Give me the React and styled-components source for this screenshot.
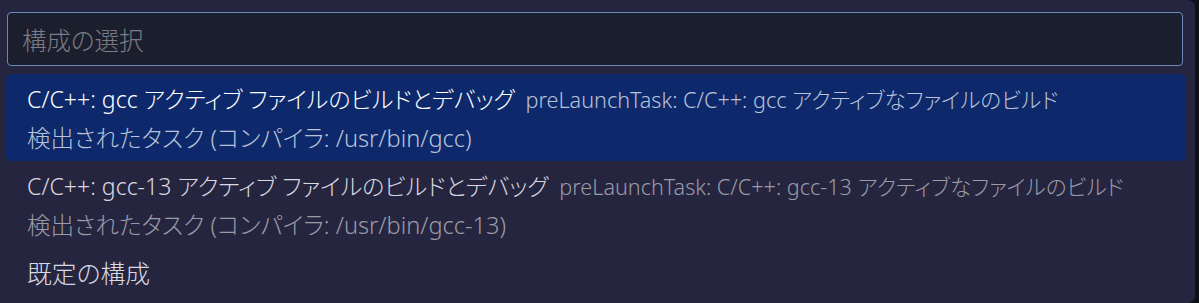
import React from "react";
import styled, { createGlobalStyle } from "styled-components";

const Global = createGlobalStyle`
  html, body { margin: 0; padding: 0; background: #14141f; }
  body { font-family: "Noto Sans", "Noto Sans CJK JP", sans-serif; font-weight: 300; }
`;

const Stage = styled.div`
  display: flex;
  width: 1199px;
  height: 303px;
  background: #101018;
`;

const Panel = styled.div`
  width: 1195px;
  height: 303px;
  box-sizing: border-box;
  background: #26253f;
  border-radius: 0 7px 7px 0;
  padding: 12px 9px 0 6px;
  display: flex;
  flex-direction: column;
`;

const InputBox = styled.div`
  height: 54px;
  box-sizing: border-box;
  margin: 0 3px 0 1px;
  background: #1b1e2d;
  border: 1.5px solid #6c88bb;
  border-radius: 4px;
  display: flex;
  align-items: center;
  padding-left: 14px;
  color: #7b7c86;
  font-size: 24.5px;
  font-feature-settings: "palt";
`;

const List = styled.div`
  margin-top: 8px;
  display: flex;
  flex-direction: column;
`;

const Item = styled.div`
  border-radius: 6px;
  padding: 4px 20px 5px 21px;
  background: ${(p) => (p.$selected ? "#0d296b" : "transparent")};
  font-feature-settings: "palt";
`;

const TitleLine = styled.div`
  height: 40px;
  display: flex;
  align-items: center;
  white-space: nowrap;
`;

const Label = styled.span`
  font-size: ${(p) => (p.$plain ? "24.8px" : "23.1px")};
  color: ${(p) => (p.$selected ? "#ffffff" : "#d9d9e2")};
`;

const Desc = styled.span`
  font-size: 21.6px;
  margin-left: 11px;
  color: ${(p) => (p.$selected ? "#b9c2d9" : "#9b9ba8")};
`;

const Detail = styled.div`
  height: 38px;
  display: flex;
  align-items: center;
  font-size: 23.6px;
  white-space: nowrap;
  color: ${(p) => (p.$selected ? "#b9c2d9" : "#9b9ba8")};
`;

const items = [
  {
    label: "C/C++: gcc アクティブ ファイルのビルドとデバッグ",
    desc: "preLaunchTask: C/C++: gcc アクティブなファイルのビルド",
    detail: "検出されたタスク (コンパイラ: /usr/bin/gcc)",
    selected: true,
  },
  {
    label: "C/C++: gcc-13 アクティブ ファイルのビルドとデバッグ",
    desc: "preLaunchTask: C/C++: gcc-13 アクティブなファイルのビルド",
    detail: "検出されたタスク (コンパイラ: /usr/bin/gcc-13)",
  },
  { label: "既定の構成", plain: true },
];

export default function App() {
  return (
    <>
      <Global />
      <Stage>
        <Panel>
          <InputBox>構成の選択</InputBox>
          <List>
            {items.map((it, i) => (
              <Item key={i} $selected={it.selected}>
                <TitleLine>
                  <Label $selected={it.selected} $plain={it.plain}>
                    {it.label}
                  </Label>
                  {it.desc && <Desc $selected={it.selected}>{it.desc}</Desc>}
                </TitleLine>
                {it.detail && <Detail $selected={it.selected}>{it.detail}</Detail>}
              </Item>
            ))}
          </List>
        </Panel>
      </Stage>
    </>
  );
}
